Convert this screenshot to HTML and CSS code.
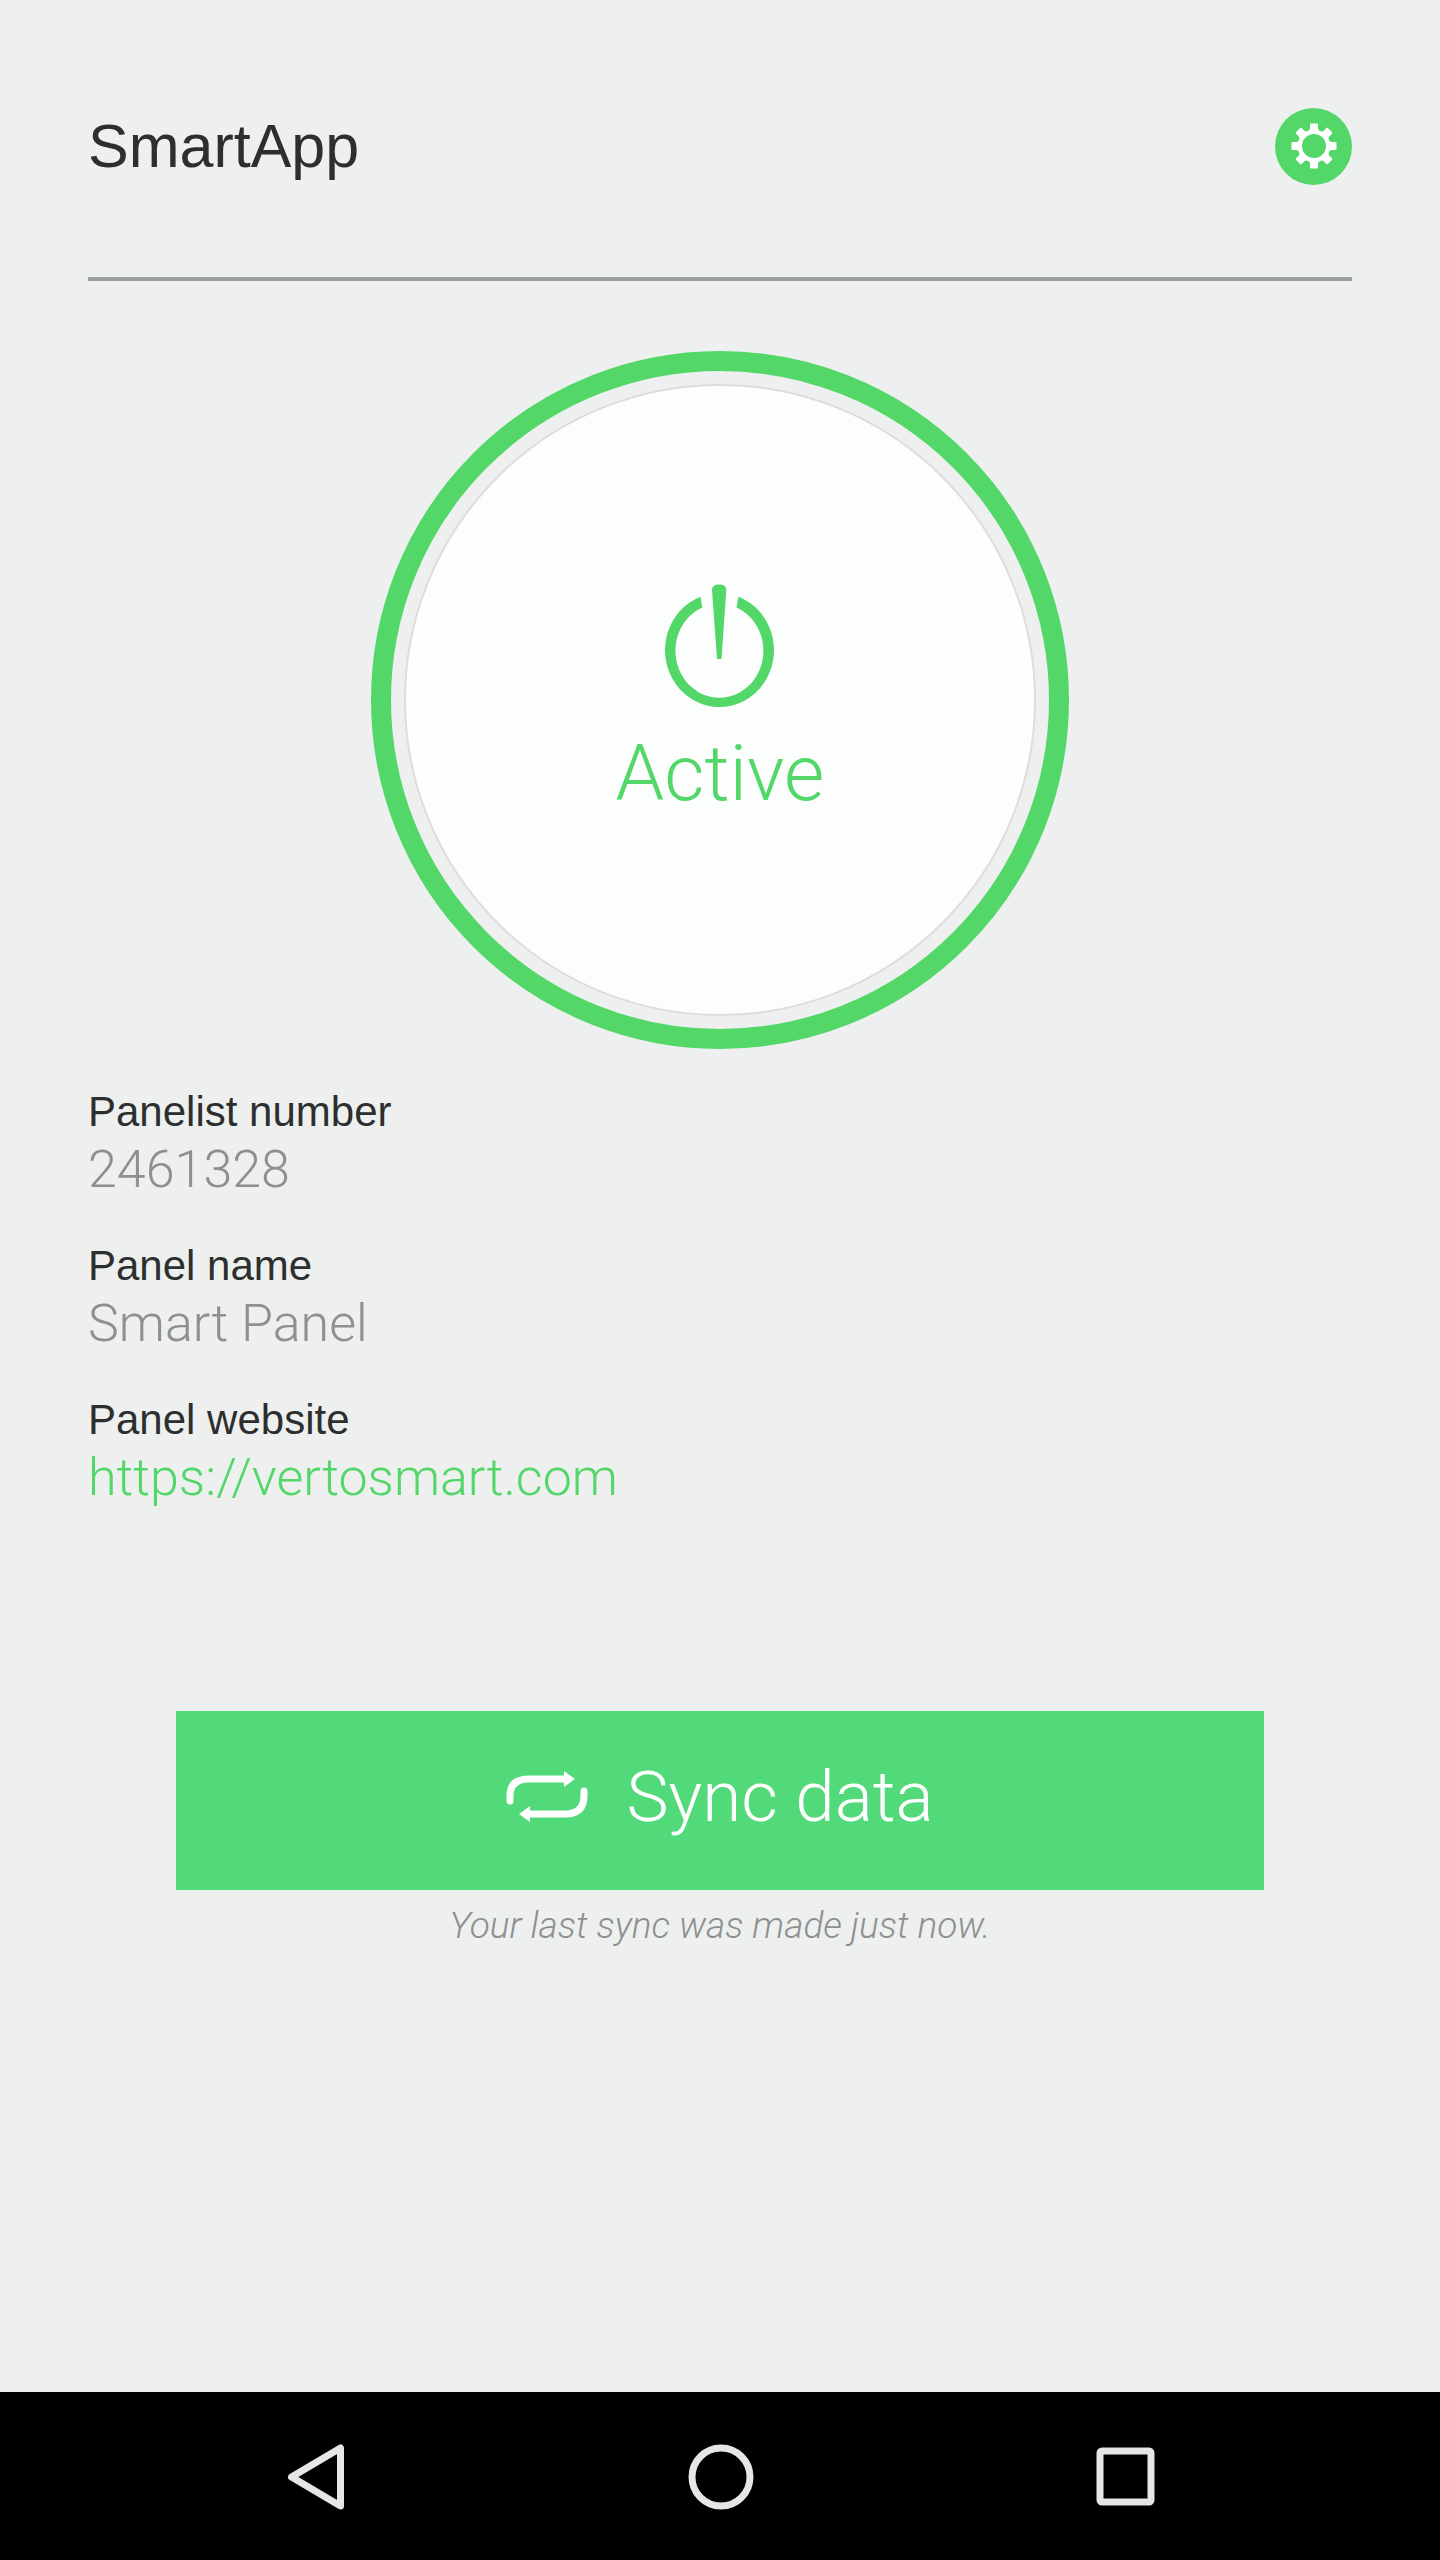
FILE: index.html
```html
<!DOCTYPE html>
<html lang="en">
<head>
    <meta charset="UTF-8">
    <meta name="viewport" content="width=device-width, initial-scale=1.0">
    <title>SmartApp</title>
    <link rel="stylesheet" href="styles.css">
</head>
<body>

    <main class="screen">
        <header class="topbar">
            <h1 class="app-name">SmartApp</h1>
            <button class="settings-btn" type="button" aria-label="Settings">
                <svg viewBox="0 0 77 77" aria-hidden="true">
                    <g transform="translate(39 38)" fill="#fff">
                        <path id="tooth" d="M-3 -22.500Q-4 -22.500 -4 -21.500V-17L-8 -12H8L4 -17V-21.500Q4 -22.500 3 -22.500Z"/>
                        <use href="#tooth" transform="rotate(45)"/>
                        <use href="#tooth" transform="rotate(90)"/>
                        <use href="#tooth" transform="rotate(135)"/>
                        <use href="#tooth" transform="rotate(180)"/>
                        <use href="#tooth" transform="rotate(225)"/>
                        <use href="#tooth" transform="rotate(270)"/>
                        <use href="#tooth" transform="rotate(315)"/>
                        <circle r="16"/>
                        <circle r="12" fill="#53d769"/>
                    </g>
                </svg>
            </button>
        </header>

        <button class="power-btn" type="button">
            <span class="power-face">
                <svg class="power-icon" viewBox="0 0 110 124" aria-hidden="true">
                    <path d="M35.500 12.700A54.500 57 0 1 0 73.500 12.700L71.500 23.400A44 47 0 1 1 37.300 23.400Z"/>
                    <path d="M47 6Q47 0.500 54.200 0.500Q61.300 0.500 61.300 6L56.500 75H52Z"/>
                </svg>
                <span class="power-label">Active</span>
            </span>
        </button>

        <dl class="details">
            <div class="detail">
                <dt>Panelist number</dt>
                <dd>2461328</dd>
            </div>
            <div class="detail">
                <dt>Panel name</dt>
                <dd>Smart Panel</dd>
            </div>
            <div class="detail">
                <dt>Panel website</dt>
                <dd><a href="https://vertosmart.com">https://vertosmart.com</a></dd>
            </div>
        </dl>

        <section class="sync">
            <button class="sync-btn" type="button">
                <svg class="sync-icon" viewBox="0 0 82 52" aria-hidden="true">
                    <g fill="none" stroke="#fff" stroke-width="7" stroke-linecap="round">
                        <path d="M4 30V25Q4 8 23 8H58"/>
                        <path d="M78 20V25Q78 43 59 43H22"/>
                    </g>
                    <path fill="#fff" d="M58 0L69 8L58 16ZM24 35L13 43L24 51Z"/>
                </svg>
                Sync data
            </button>
            <p class="sync-note">Your last sync was made just now.</p>
        </section>
    </main>

    <nav class="navbar">
        <button type="button" aria-label="Back">
            <svg viewBox="0 0 80 80" aria-hidden="true">
                <path d="M16.500 41L65.500 12V70Z"/>
            </svg>
        </button>
        <button type="button" aria-label="Home">
            <svg viewBox="0 0 80 80" aria-hidden="true">
                <circle cx="41" cy="41" r="29"/>
            </svg>
        </button>
        <button type="button" aria-label="Recent apps">
            <svg viewBox="0 0 80 80" aria-hidden="true">
                <rect x="15" y="15" width="51" height="51" rx="2"/>
            </svg>
        </button>
    </nav>

</body>
</html>
```

FILE: styles.css
```css
* {
    box-sizing: border-box;
}
body {
    margin: 0;
    min-height: 100vh;
    display: flex;
    flex-direction: column;
    background-color: #edf0ef;
    color: #2d2f2e;
    font-family: "Liberation Sans", Arial, sans-serif;
}
button {
    padding: 0;
    border: none;
    background: none;
    font: inherit;
    cursor: pointer;
}
svg {
    display: block;
}
.screen {
    flex: 1;
    padding: 0 88px;
}

/* Header */
.topbar {
    display: flex;
    justify-content: space-between;
    align-items: center;
    padding: 108px 0 92px;
    border-bottom: 4px solid #9b9f9d;
}
.app-name {
    margin: 0;
    font-size: 61px;
    line-height: 77px;
    font-weight: normal;
}
.settings-btn {
    width: 77px;
    height: 77px;
    border-radius: 50%;
    background-color: #53d769;
}

/* Power button */
.power-btn {
    display: block;
    width: 698px;
    max-width: 100%;
    aspect-ratio: 1;
    margin: 70px auto 34px;
    padding: 13px;
    border: 20px solid #53d769;
    border-radius: 50%;
    background-color: #eeefef;
}
.power-face {
    display: flex;
    flex-direction: column;
    align-items: center;
    justify-content: center;
    gap: 18px;
    height: 100%;
    padding-top: 6px;
    border: 2px solid #dcdede;
    border-radius: 50%;
    background-color: #fcfdfd;
    color: #53d769;
}
.power-icon {
    width: 110px;
    height: 124px;
    fill: #53d769;
}
.power-label {
    font-family: Roboto, "Liberation Sans", sans-serif;
    font-weight: 300;
    font-size: 78px;
    line-height: 96px;
}

/* Panel details */
.details {
    display: flex;
    flex-direction: column;
    gap: 38px;
    margin: 0;
}
.detail dt {
    font-size: 42px;
    line-height: 58px;
}
.detail dd {
    margin: 0;
    font-family: Roboto, "Liberation Sans", sans-serif;
    font-weight: 300;
    font-size: 52px;
    line-height: 58px;
    color: #8d908f;
}
.detail a {
    color: #53d769;
    text-decoration: none;
}

/* Sync */
.sync {
    margin: 204px 88px 0;
}
.sync-btn {
    display: flex;
    align-items: center;
    justify-content: center;
    gap: 38px;
    width: 100%;
    padding: 36px 0 44px;
    background-color: #52d979;
    color: #fff;
    font-family: Roboto, "Liberation Sans", sans-serif;
    font-weight: 300;
    font-size: 71px;
    line-height: 99px;
}
.sync-icon {
    width: 82px;
    height: 52px;
}
.sync-note {
    margin: 12px 0 0;
    font-family: Roboto, "Liberation Sans", sans-serif;
    font-weight: 300;
    font-size: 37px;
    line-height: 48px;
    font-style: italic;
    text-align: center;
    color: #8d908f;
}

/* System navigation */
.navbar {
    display: flex;
    padding: 44px 112px;
    background-color: #000;
}
.navbar button {
    flex: 1;
}
.navbar svg {
    width: 80px;
    height: 80px;
    margin: 0 auto;
    fill: none;
    stroke: #e6e6e6;
    stroke-width: 7;
    stroke-linejoin: round;
}
```
